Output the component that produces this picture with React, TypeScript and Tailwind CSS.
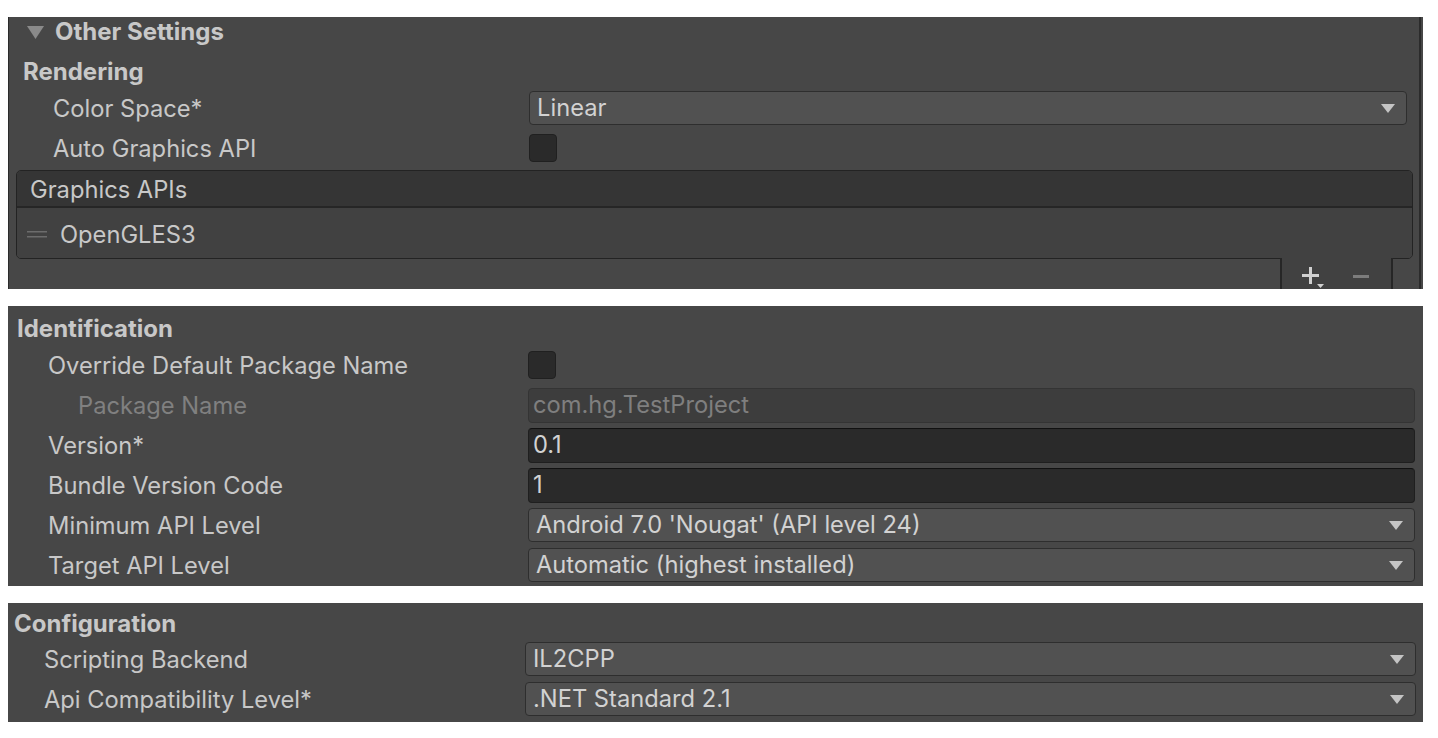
import React from 'react';

const Arrow = () => (
  <svg width="14" height="9" viewBox="0 0 14 9" className="shrink-0">
    <polygon points="0,0 14,0 7,9" fill="#c4c4c4" />
  </svg>
);

function Dropdown({ value }: { value: string }) {
  return (
    <div className="h-[34px] w-full rounded-[4px] bg-[#515151] border border-[#2e2e2e] flex items-center justify-between pl-[7px] pr-[11px]">
      <span className="text-[#d2d2d2]">{value}</span>
      <Arrow />
    </div>
  );
}

function TextField({ value, disabled }: { value: string; disabled?: boolean }) {
  return disabled ? (
    <div className="h-[35px] w-full rounded-[4px] bg-[#3d3d3d] border border-[#343434] flex items-center pl-[4px]">
      <span className="text-[#7f7f7f]">{value}</span>
    </div>
  ) : (
    <div className="h-[35px] w-full rounded-[4px] bg-[#2a2a2a] border border-[#1f1f1f] border-t-[#111111] flex items-center pl-[4px]">
      <span className="text-[#d2d2d2]">{value}</span>
    </div>
  );
}

const Checkbox = () => (
  <div className="w-[28px] h-[28px] rounded-[4px] bg-[#2a2a2a] border border-[#202020]" />
);

function Row({
  label,
  labelW,
  pl,
  pr,
  children,
  dim,
}: {
  label: string;
  labelW: string;
  pl: string;
  pr: string;
  children: React.ReactNode;
  dim?: boolean;
}) {
  return (
    <div className={`h-[40px] shrink-0 flex items-center ${pr}`}>
      <div className={`${labelW} ${pl} pt-[1px] shrink-0 ${dim ? 'text-[#808080]' : 'text-[#c8c8c8]'}`}>{label}</div>
      <div className="flex-1 flex items-center">{children}</div>
    </div>
  );
}

export default function App() {
  return (
    <div className="w-[1438px] h-[738px] bg-white pt-[17px] pl-[8px] text-[23.7px] leading-none [font-family:Inter,'Noto_Sans',sans-serif] text-[#c8c8c8] overflow-hidden">
      {/* Panel 1 */}
      <div className="w-[1415px] h-[272px] bg-[#474747] border-l border-[#2b2b2b] flex overflow-hidden">
        <div className="flex-1 flex flex-col">
          <div className="h-[30px] shrink-0 flex items-center pl-[18px]">
            <svg width="17" height="13" viewBox="0 0 17 13">
              <polygon points="0,0 17,0 8.5,13" fill="#8a8a8a" />
            </svg>
            <span className="ml-[11px] font-bold text-[24px]">Other Settings</span>
          </div>
          <div className="h-[41px] shrink-0 pt-[9px] flex items-center pl-[14px] font-bold text-[24px]">Rendering</div>
          <Row label="Color Space*" labelW="w-[520px]" pl="pl-[44px]" pr="pr-[12px]">
            <Dropdown value="Linear" />
          </Row>
          <Row label="Auto Graphics API" labelW="w-[520px]" pl="pl-[44px]" pr="pr-[12px]">
            <Checkbox />
          </Row>
          <div className="shrink-0 mt-[2px] ml-[7px] mr-[6px]">
            <div className="rounded-[5px] border border-[#232323] overflow-hidden">
              <div className="h-[37px] pt-[3px] bg-[#353535] border-b-2 border-[#262626] flex items-center pl-[13px]">
                Graphics APIs
              </div>
              <div className="h-[50px] pt-[3px] bg-[#414141] flex items-center pl-[10px]">
                <svg width="20" height="7" viewBox="0 0 20 7" className="shrink-0">
                  <rect x="0" y="0" width="20" height="1.5" fill="#6c6c6c" />
                  <rect x="0" y="5" width="20" height="1.5" fill="#6c6c6c" />
                </svg>
                <span className="ml-[13px]">OpenGLES3</span>
              </div>
            </div>
            <div className="flex justify-end pr-[20px] -mt-[1px]">
              <div className="w-[113px] h-[31px] bg-[#414141] border-l-2 border-r-2 border-[#262626] relative">
                <svg width="113" height="31" viewBox="0 0 113 31" className="absolute left-[-2px] top-0">
                  <rect x="29" y="9" width="3" height="17" fill="#d0d0d0" />
                  <rect x="22" y="16" width="17" height="3" fill="#d0d0d0" />
                  <polygon points="37,26 44,26 40.5,30" fill="#d0d0d0" />
                  <rect x="73" y="17" width="16" height="3" fill="#7c7c7c" />
                </svg>
              </div>
            </div>
          </div>
        </div>
        <div className="w-[2px] shrink-0 bg-[#2b2b2b]" />
        <div className="w-[2px] shrink-0" />
      </div>

      {/* Panel 2 */}
      <div className="mt-[17px] w-[1415px] h-[280px] bg-[#474747] flex flex-col">
        <div className="h-[39px] shrink-0 pt-[6px] flex items-center pl-[9px] font-bold text-[24px]">Identification</div>
        <Row label="Override Default Package Name" labelW="w-[520px]" pl="pl-[40px]" pr="pr-[8px]">
          <Checkbox />
        </Row>
        <Row label="Package Name" labelW="w-[520px]" pl="pl-[70px]" pr="pr-[8px]" dim>
          <TextField value="com.hg.TestProject" disabled />
        </Row>
        <Row label="Version*" labelW="w-[520px]" pl="pl-[40px]" pr="pr-[8px]">
          <TextField value="0.1" />
        </Row>
        <Row label="Bundle Version Code" labelW="w-[520px]" pl="pl-[40px]" pr="pr-[8px]">
          <TextField value="1" />
        </Row>
        <Row label="Minimum API Level" labelW="w-[520px]" pl="pl-[40px]" pr="pr-[8px]">
          <Dropdown value="Android 7.0 'Nougat' (API level 24)" />
        </Row>
        <Row label="Target API Level" labelW="w-[520px]" pl="pl-[40px]" pr="pr-[8px]">
          <Dropdown value="Automatic (highest installed)" />
        </Row>
      </div>

      {/* Panel 3 */}
      <div className="mt-[17px] w-[1415px] h-[119px] bg-[#474747] flex flex-col">
        <div className="h-[36px] shrink-0 pt-[5px] flex items-center pl-[6px] font-bold text-[24px]">Configuration</div>
        <Row label="Scripting Backend" labelW="w-[517px]" pl="pl-[36px]" pr="pr-[7px]">
          <Dropdown value="IL2CPP" />
        </Row>
        <Row label="Api Compatibility Level*" labelW="w-[517px]" pl="pl-[36px]" pr="pr-[7px]">
          <Dropdown value=".NET Standard 2.1" />
        </Row>
      </div>
    </div>
  );
}
